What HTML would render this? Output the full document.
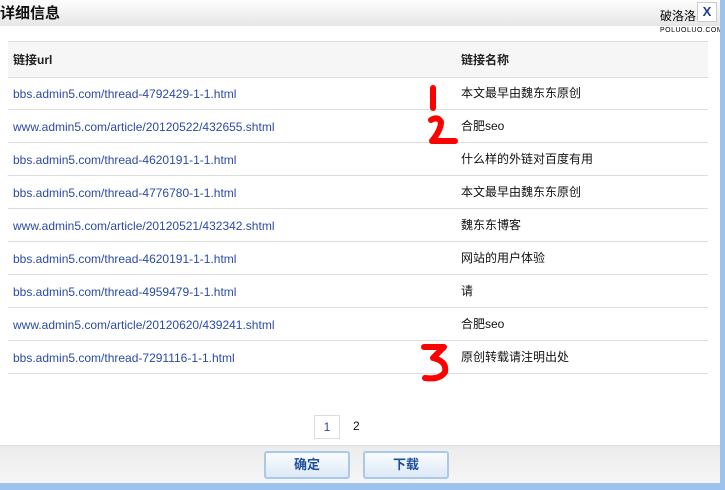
<html><head><style>
body{margin:0;width:725px;height:490px;position:relative;overflow:hidden;background:#fff;font-family:"Liberation Sans","Noto Sans CJK SC",sans-serif;}
.tb{position:absolute;left:0;top:0;width:720px;height:26px;background:linear-gradient(#fdfdfd,#e6e6e6);}
.tb b{position:absolute;left:0;top:2px;font-size:15px;color:#111;}
.x{position:absolute;left:697px;top:2px;width:18px;height:18px;background:#fff;border:1px solid #ccc;color:#1a3c9c;font-weight:bold;font-size:13px;text-align:center;line-height:18px}
.wm{position:absolute;left:660px;top:7px;font-size:12px;color:#000}
.wm2{position:absolute;left:660px;top:27px;font-size:7px;color:#000;letter-spacing:0.5px}
.rb{position:absolute;left:720px;top:0;width:5px;height:490px;background:#9cc3ee}
.bb{position:absolute;left:0;top:483px;width:725px;height:7px;background:#9cc3ee}
.hd{position:absolute;left:8px;top:41px;width:700px;height:35px;background:#f6f6f6;border-top:1px solid #ddd;border-bottom:1px solid #ddd;font-size:12px;font-weight:bold;color:#222}
.row{position:absolute;left:8px;width:700px;height:32px;border-bottom:1px solid #ddd;font-size:12px}
.u{position:absolute;left:5px;top:10px;color:#2a4aa8}
.n{position:absolute;left:453px;top:7px;color:#111}
.foot{position:absolute;left:0;top:445px;width:720px;height:38px;background:linear-gradient(#ececec,#f6f6f6);border-top:1px solid #ddd}
.btn{position:absolute;top:451px;width:82px;height:24px;border:2px solid #a9c9ec;border-radius:3px;background:linear-gradient(#fafcff,#dde9f6);color:#1f4f9f;font-weight:bold;font-size:13px;text-align:center;line-height:24px}
.red{position:absolute;}
</style></head><body>
<div class="tb"><b>详细信息</b></div>
<div class="wm">破洛洛</div><div class="wm2">POLUOLUO.COM</div>
<div class="x">X</div>
<div class="hd"><span style="position:absolute;left:5px;top:9px">链接url</span><span style="position:absolute;left:453px;top:9px">链接名称</span></div>
<div class="row" style="top:77px"><span class="u">bbs.admin5.com/thread-4792429-1-1.html</span><span class="n">本文最早由魏东东原创</span></div>
<div class="row" style="top:110px"><span class="u">www.admin5.com/article/20120522/432655.shtml</span><span class="n">合肥seo</span></div>
<div class="row" style="top:143px"><span class="u">bbs.admin5.com/thread-4620191-1-1.html</span><span class="n">什么样的外链对百度有用</span></div>
<div class="row" style="top:176px"><span class="u">bbs.admin5.com/thread-4776780-1-1.html</span><span class="n">本文最早由魏东东原创</span></div>
<div class="row" style="top:209px"><span class="u">www.admin5.com/article/20120521/432342.shtml</span><span class="n">魏东东博客</span></div>
<div class="row" style="top:242px"><span class="u">bbs.admin5.com/thread-4620191-1-1.html</span><span class="n">网站的用户体验</span></div>
<div class="row" style="top:275px"><span class="u">bbs.admin5.com/thread-4959479-1-1.html</span><span class="n">请</span></div>
<div class="row" style="top:308px"><span class="u">www.admin5.com/article/20120620/439241.shtml</span><span class="n">合肥seo</span></div>
<div class="row" style="top:341px"><span class="u">bbs.admin5.com/thread-7291116-1-1.html</span><span class="n">原创转载请注明出处</span></div>
<svg class="red" style="left:0;top:0" width="725" height="490"><g fill="none" stroke="#f00" stroke-width="6" stroke-linecap="round" stroke-linejoin="round">
<path d="M433 88 L433 108"/>
<path d="M431 120 Q438 116 441 122 Q441 130 432 141 L455 141"/>
<path d="M424 347 L444 347 L433 358 Q447 361 445 372 Q440 380 425 378"/></g></svg>
<div style="position:absolute;left:314px;top:415px;width:24px;height:22px;border:1px solid #ddd;color:#2a4aa8;font-size:12px;text-align:center;line-height:22px">1</div>
<div style="position:absolute;left:353px;top:419px;font-size:12px;color:#111">2</div>
<div class="foot"></div>
<div class="btn" style="left:264px">确定</div>
<div class="btn" style="left:363px">下载</div>
<div class="rb"></div><div class="bb"></div>
</body></html>
